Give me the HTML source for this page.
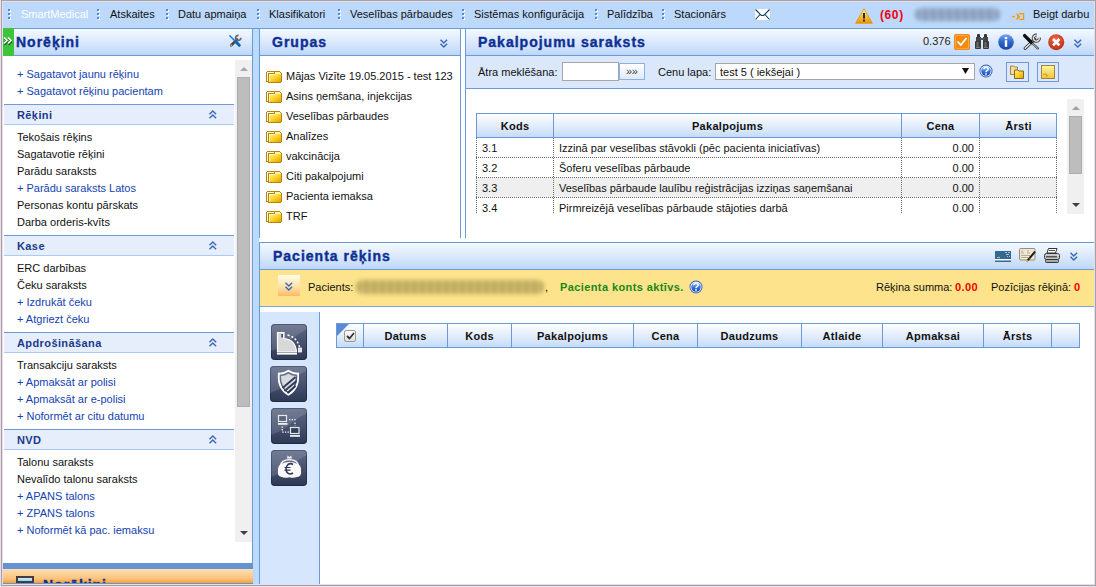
<!DOCTYPE html>
<html><head><meta charset="utf-8">
<style>
*{margin:0;padding:0;box-sizing:border-box}
html,body{width:1096px;height:587px;overflow:hidden;background:#ecdcec;font-family:"Liberation Sans",sans-serif;font-size:11px;color:#111}
.a{position:absolute}
svg{position:absolute;overflow:visible}
.t{position:absolute;white-space:nowrap;line-height:15px}
.b{font-weight:bold;letter-spacing:0.4px}
.ttl{position:absolute;white-space:nowrap;font-weight:bold;font-size:14px;letter-spacing:1px;color:#0e3094;line-height:16px;-webkit-text-stroke:0.4px #0e3094}
.hdr{position:absolute;background:linear-gradient(#f5f9fe,#dbe9fc 50%,#bed7f8)}
.grip{position:absolute;width:3px;height:11px;top:9px;background:repeating-linear-gradient(#fff 0 2px,transparent 2px 4px) 1px 1px/2px 11px no-repeat}
.grip:after{content:"";position:absolute;left:0;top:0;width:2px;height:10px;background:repeating-linear-gradient(#5089dc 0 2px,transparent 2px 4px)}
.lnk{color:#1443b0}
.sec{position:absolute;left:4px;width:230px;height:21px;background:#e6eefc;border-top:1px solid #6f9ad6;border-bottom:1px solid #a9cbf6}
.sec span{position:absolute;left:13px;top:3px;font-weight:bold;color:#1a3a8a;letter-spacing:0.4px;line-height:15px}
.sec svg{left:205px;top:5px}
.th{position:absolute;background:linear-gradient(#fdfeff,#e6effc 45%,#c6dbf8);border:1px solid #6c9ad8}
.tht{position:absolute;font-weight:bold;letter-spacing:0.3px;color:#111;top:5px;white-space:nowrap;text-align:center;line-height:15px}
.dv{position:absolute;top:0;bottom:0;width:1px;background:#6c9ad8}
.row{position:absolute;left:0;width:581px;height:20px;border-bottom:1px dotted #777}
.vd{position:absolute;top:0;width:1px;height:76px;background:repeating-linear-gradient(#6a6a6a 0 1px,transparent 1px 2px)}
.hd{position:absolute;left:0;width:581px;height:1px;background:repeating-linear-gradient(90deg,#6a6a6a 0 1px,transparent 1px 2px)}
.sico{position:absolute;left:271px;width:36px;height:36px;border-radius:4px;background:linear-gradient(#5e6a86,#46526e 50%,#2c3854);overflow:hidden;box-shadow:inset 0 0 0 1px rgba(20,30,50,0.5)}
</style></head><body>
<!-- frame -->
<div class="a" style="left:1px;top:0;width:1095px;height:586px;background:#a89fa8"></div>
<div class="a" style="left:2px;top:1px;width:1093px;height:584px;background:#e2e0e2"></div>
<div class="a" style="left:3px;top:2px;width:1091px;height:582px;background:#fff"></div>
<!-- menu bar -->
<div class="a" style="left:3px;top:2px;width:1091px;height:26px;background:#bcd9fb"></div>
<div class="a" style="left:3px;top:28px;width:1091px;height:1px;background:#6a9ad8"></div>
<div class="grip" style="left:8px"></div>
<div class="t" style="left:21px;top:7px;color:#fff">SmartMedical</div>
<div class="grip" style="left:97px"></div>
<div class="t" style="left:110px;top:7px">Atskaites</div>
<div class="grip" style="left:166px"></div>
<div class="t" style="left:178px;top:7px">Datu apmaiņa</div>
<div class="grip" style="left:257px"></div>
<div class="t" style="left:269px;top:7px">Klasifikatori</div>
<div class="grip" style="left:338px"></div>
<div class="t" style="left:350px;top:7px">Veselības pārbaudes</div>
<div class="grip" style="left:462px"></div>
<div class="t" style="left:474px;top:7px">Sistēmas konfigurācija</div>
<div class="grip" style="left:595px"></div>
<div class="t" style="left:607px;top:7px">Palīdzība</div>
<div class="grip" style="left:662px"></div>
<div class="t" style="left:674px;top:7px">Stacionārs</div>
<svg style="left:755px;top:9px" width="15" height="11" viewBox="0 0 15 11"><rect x="0" y="0" width="15" height="11" fill="#fff"/><path d="M0.5 0.5 L5 5.2 L6.5 6.5 H8.5 L10 5.2 L14.5 0.5 M0.5 10.5 L5 5.5 M14.5 10.5 L10 5.5" fill="none" stroke="#0c3a60" stroke-width="1.1"/></svg>
<svg style="left:855px;top:8px" width="18" height="16" viewBox="0 0 18 16"><defs><linearGradient id="wg" x1="0" y1="0" x2="0" y2="1"><stop offset="0" stop-color="#fff4b8"/><stop offset="0.55" stop-color="#fcc030"/><stop offset="1" stop-color="#f59000"/></linearGradient></defs><path d="M9 0.8 L17.4 15.2 L0.6 15.2 Z" fill="url(#wg)" stroke="#e09000" stroke-width="0.8" stroke-linejoin="round"/><rect x="8" y="5" width="2" height="5.5" fill="#1a2a3a"/><rect x="8" y="11.5" width="2" height="2" fill="#2a3a4a"/></svg>
<div class="t b" style="left:880px;top:8px;color:#f4000c;font-size:12px;letter-spacing:0.6px">(60)</div>
<div class="a" style="left:915px;top:8px;width:85px;height:13px;background:repeating-linear-gradient(90deg,#7f95b6 0 5px,#a2b4cc 5px 8px);border-radius:6px;filter:blur(2px);opacity:0.9"></div>
<svg style="left:1012px;top:13px" width="13" height="7" viewBox="0 0 13 7"><rect x="0" y="2.9" width="3" height="1.3" fill="#f89a00"/><path d="M4 0.6 H5.6 L8.2 3.5 L5.6 6.4 H4 L5.6 3.5 Z" fill="#f89a00"/><path d="M7.2 0.6 H11.6 V6.4 H7.2" fill="none" stroke="#f89a00" stroke-width="1.2"/></svg>
<div class="t" style="left:1033px;top:7px">Beigt darbu</div>

<!-- left panel -->
<div class="a" style="left:3px;top:29px;width:250px;height:555px;background:#fff;border-right:1px solid #6a9ad8"></div>
<div class="hdr" style="left:14px;top:29px;width:238px;height:27px;border-bottom:1px solid #6a9ad8"></div>
<div class="a" style="left:3px;top:28px;width:11px;height:28px;background:#3cc43c"></div>
<svg style="left:3px;top:37px" width="11" height="9" viewBox="0 0 11 9"><path d="M1.5 2 L4.5 5 L1.5 8 M5.5 2 L8.5 5 L5.5 8" fill="none" stroke="#1a3a1a" stroke-opacity="0.75" stroke-width="1.5"/><path d="M1 0.5 L4 3.5 L1 6.5 M5 0.5 L8 3.5 L5 6.5" fill="none" stroke="#fff" stroke-width="1.5"/></svg>
<div class="ttl" style="left:16px;top:34px">Norēķini</div>
<svg style="left:229px;top:35px" width="12" height="12" viewBox="0 0 12 12"><path d="M8.2 4.6 L2.2 10.3" stroke="#4a4a4a" stroke-width="2.8" stroke-linecap="round"/><circle cx="2.1" cy="10.3" r="0.7" fill="#ddd"/><path d="M9.6 0.4 A2.6 2.6 0 1 0 11.8 2.8" fill="none" stroke="#6a6a6a" stroke-width="1.8"/><path d="M0.8 0.8 L6 6" stroke="#1a7ad0" stroke-width="1.5" stroke-linecap="round"/><path d="M6.5 6.5 L10.3 10.3" stroke="#0f62b8" stroke-width="3" stroke-linecap="round"/></svg>

<div class="t lnk" style="left:17px;top:67px">+ Sagatavot jaunu rēķinu</div>
<div class="t lnk" style="left:17px;top:84px">+ Sagatavot rēķinu pacientam</div>

<div class="sec" style="top:104px"><span>Rēķini</span><svg width="8" height="8" viewBox="0 0 8 8"><path d="M0.5 4.2 L3.8 1 L7.1 4.2 M0.5 8.2 L3.8 5 L7.1 8.2" fill="none" stroke="#3a69b8" stroke-width="1.45"/></svg></div>
<div class="t" style="left:17px;top:130px">Tekošais rēķins</div>
<div class="t" style="left:17px;top:147px">Sagatavotie rēķini</div>
<div class="t" style="left:17px;top:164px">Parādu saraksts</div>
<div class="t lnk" style="left:17px;top:181px">+ Parādu saraksts Latos</div>
<div class="t" style="left:17px;top:198px">Personas kontu pārskats</div>
<div class="t" style="left:17px;top:215px">Darba orderis-kvīts</div>

<div class="sec" style="top:235px"><span>Kase</span><svg width="8" height="8" viewBox="0 0 8 8"><path d="M0.5 4.2 L3.8 1 L7.1 4.2 M0.5 8.2 L3.8 5 L7.1 8.2" fill="none" stroke="#3a69b8" stroke-width="1.45"/></svg></div>
<div class="t" style="left:17px;top:261px">ERC darbības</div>
<div class="t" style="left:17px;top:278px">Čeku saraksts</div>
<div class="t lnk" style="left:17px;top:295px">+ Izdrukāt čeku</div>
<div class="t lnk" style="left:17px;top:312px">+ Atgriezt čeku</div>

<div class="sec" style="top:332px"><span>Apdrošināšana</span><svg width="8" height="8" viewBox="0 0 8 8"><path d="M0.5 4.2 L3.8 1 L7.1 4.2 M0.5 8.2 L3.8 5 L7.1 8.2" fill="none" stroke="#3a69b8" stroke-width="1.45"/></svg></div>
<div class="t" style="left:17px;top:358px">Transakciju saraksts</div>
<div class="t lnk" style="left:17px;top:375px">+ Apmaksāt ar polisi</div>
<div class="t lnk" style="left:17px;top:392px">+ Apmaksāt ar e-polisi</div>
<div class="t lnk" style="left:17px;top:409px">+ Noformēt ar citu datumu</div>

<div class="sec" style="top:429px"><span>NVD</span><svg width="8" height="8" viewBox="0 0 8 8"><path d="M0.5 4.2 L3.8 1 L7.1 4.2 M0.5 8.2 L3.8 5 L7.1 8.2" fill="none" stroke="#3a69b8" stroke-width="1.45"/></svg></div>
<div class="t" style="left:17px;top:455px">Talonu saraksts</div>
<div class="t" style="left:17px;top:472px">Nevalīdo talonu saraksts</div>
<div class="t lnk" style="left:17px;top:489px">+ APANS talons</div>
<div class="t lnk" style="left:17px;top:506px">+ ZPANS talons</div>
<div class="t lnk" style="left:17px;top:523px">+ Noformēt kā pac. iemaksu</div>

<div class="a" style="left:235px;top:60px;width:17px;height:482px;background:#f0f0f0"></div>
<svg style="left:240px;top:67px" width="8" height="4" viewBox="0 0 8 4"><path d="M0 4 L4 0 L8 4 Z" fill="#a8a8a8"/></svg>
<div class="a" style="left:237px;top:77px;width:13px;height:330px;background:#bdbdbd;border:1px solid #adadad"></div>
<svg style="left:240px;top:531px" width="8" height="4" viewBox="0 0 8 4"><path d="M0 0 L4 4 L8 0 Z" fill="#404040"/></svg>

<div class="a" style="left:3px;top:563px;width:250px;height:6px;background:#6592d0"></div>
<div class="a" style="left:3px;top:569px;width:250px;height:14px;background:linear-gradient(#ffdfb4,#fcc27e 70%,#f7a02a)"></div>
<div class="a" style="left:3px;top:583px;width:250px;height:1px;background:#6592d0"></div>
<div class="a" style="left:16px;top:576px;width:18px;height:7px;border:2px solid #4a3a38;background:linear-gradient(#c8f0ff,#8ad8f8)"></div>
<div class="a" style="left:43px;top:577px;width:100px;height:6px;overflow:hidden"><div class="ttl" style="left:0;top:0">Norēķini</div></div>

<div class="a" style="left:253px;top:29px;width:6px;height:555px;background:#bcdafc"></div>
<svg width="0" height="0" style="position:absolute">
<defs>
<linearGradient id="fg" x1="0" y1="0" x2="1" y2="1"><stop offset="0" stop-color="#fff57a"/><stop offset="0.5" stop-color="#fcd22a"/><stop offset="1" stop-color="#e0a000"/></linearGradient>


<linearGradient id="hg" x1="0" y1="0" x2="0" y2="1"><stop offset="0" stop-color="#a8d0ff"/><stop offset="0.5" stop-color="#3a78e0"/><stop offset="1" stop-color="#1040a8"/></linearGradient>

</defs></svg>

<!-- Grupas panel -->
<div class="a" style="left:259px;top:29px;width:202px;height:209px;background:#fff;border-left:1px solid #6a9ad8;border-right:1px solid #6a9ad8"></div>
<div class="hdr" style="left:260px;top:29px;width:200px;height:27px;border-bottom:1px solid #6a9ad8"></div>
<div class="ttl" style="left:272px;top:34px">Grupas</div>
<svg style="left:440px;top:39px" width="8" height="8" viewBox="0 0 8 8"><path d="M0.5 0.8 L3.8 4 L7.1 0.8 M0.5 4.8 L3.8 8 L7.1 4.8" fill="none" stroke="#3a69b8" stroke-width="1.45"/></svg>

<svg style="left:266px;top:71px" width="16" height="12" viewBox="0 0 16 12"><g shape-rendering="crispEdges"><rect x="1" y="0" width="13" height="1" fill="#b88408"/><rect x="0" y="1" width="1" height="10" fill="#b88408"/><rect x="14" y="1" width="1" height="1" fill="#b88408"/><rect x="15" y="2" width="1" height="9" fill="#b88408"/><rect x="2" y="11" width="13" height="1" fill="#b88408"/><rect x="1" y="10" width="1" height="1" fill="#b88408"/><rect x="1" y="1" width="1" height="9" fill="#fffbe8"/><rect x="2" y="1" width="6" height="1" fill="#fffbe8"/><rect x="2" y="2" width="6" height="1" fill="#b88408"/><rect x="8" y="1" width="1" height="2" fill="#b88408"/><rect x="2" y="2" width="1" height="9" fill="#b88408"/><rect x="9" y="1" width="5" height="2" fill="#fff6b8"/><rect x="14" y="2" width="1" height="1" fill="#fff6b8"/><rect x="3" y="3" width="12" height="8" fill="url(#fg)"/><rect x="3" y="3" width="6" height="1" fill="#fff8d0"/><rect x="3" y="4" width="1" height="7" fill="#fff2a8"/></g></svg>
<svg style="left:266px;top:91px" width="16" height="12" viewBox="0 0 16 12"><g shape-rendering="crispEdges"><rect x="1" y="0" width="13" height="1" fill="#b88408"/><rect x="0" y="1" width="1" height="10" fill="#b88408"/><rect x="14" y="1" width="1" height="1" fill="#b88408"/><rect x="15" y="2" width="1" height="9" fill="#b88408"/><rect x="2" y="11" width="13" height="1" fill="#b88408"/><rect x="1" y="10" width="1" height="1" fill="#b88408"/><rect x="1" y="1" width="1" height="9" fill="#fffbe8"/><rect x="2" y="1" width="6" height="1" fill="#fffbe8"/><rect x="2" y="2" width="6" height="1" fill="#b88408"/><rect x="8" y="1" width="1" height="2" fill="#b88408"/><rect x="2" y="2" width="1" height="9" fill="#b88408"/><rect x="9" y="1" width="5" height="2" fill="#fff6b8"/><rect x="14" y="2" width="1" height="1" fill="#fff6b8"/><rect x="3" y="3" width="12" height="8" fill="url(#fg)"/><rect x="3" y="3" width="6" height="1" fill="#fff8d0"/><rect x="3" y="4" width="1" height="7" fill="#fff2a8"/></g></svg>
<svg style="left:266px;top:111px" width="16" height="12" viewBox="0 0 16 12"><g shape-rendering="crispEdges"><rect x="1" y="0" width="13" height="1" fill="#b88408"/><rect x="0" y="1" width="1" height="10" fill="#b88408"/><rect x="14" y="1" width="1" height="1" fill="#b88408"/><rect x="15" y="2" width="1" height="9" fill="#b88408"/><rect x="2" y="11" width="13" height="1" fill="#b88408"/><rect x="1" y="10" width="1" height="1" fill="#b88408"/><rect x="1" y="1" width="1" height="9" fill="#fffbe8"/><rect x="2" y="1" width="6" height="1" fill="#fffbe8"/><rect x="2" y="2" width="6" height="1" fill="#b88408"/><rect x="8" y="1" width="1" height="2" fill="#b88408"/><rect x="2" y="2" width="1" height="9" fill="#b88408"/><rect x="9" y="1" width="5" height="2" fill="#fff6b8"/><rect x="14" y="2" width="1" height="1" fill="#fff6b8"/><rect x="3" y="3" width="12" height="8" fill="url(#fg)"/><rect x="3" y="3" width="6" height="1" fill="#fff8d0"/><rect x="3" y="4" width="1" height="7" fill="#fff2a8"/></g></svg>
<svg style="left:266px;top:131px" width="16" height="12" viewBox="0 0 16 12"><g shape-rendering="crispEdges"><rect x="1" y="0" width="13" height="1" fill="#b88408"/><rect x="0" y="1" width="1" height="10" fill="#b88408"/><rect x="14" y="1" width="1" height="1" fill="#b88408"/><rect x="15" y="2" width="1" height="9" fill="#b88408"/><rect x="2" y="11" width="13" height="1" fill="#b88408"/><rect x="1" y="10" width="1" height="1" fill="#b88408"/><rect x="1" y="1" width="1" height="9" fill="#fffbe8"/><rect x="2" y="1" width="6" height="1" fill="#fffbe8"/><rect x="2" y="2" width="6" height="1" fill="#b88408"/><rect x="8" y="1" width="1" height="2" fill="#b88408"/><rect x="2" y="2" width="1" height="9" fill="#b88408"/><rect x="9" y="1" width="5" height="2" fill="#fff6b8"/><rect x="14" y="2" width="1" height="1" fill="#fff6b8"/><rect x="3" y="3" width="12" height="8" fill="url(#fg)"/><rect x="3" y="3" width="6" height="1" fill="#fff8d0"/><rect x="3" y="4" width="1" height="7" fill="#fff2a8"/></g></svg>
<svg style="left:266px;top:151px" width="16" height="12" viewBox="0 0 16 12"><g shape-rendering="crispEdges"><rect x="1" y="0" width="13" height="1" fill="#b88408"/><rect x="0" y="1" width="1" height="10" fill="#b88408"/><rect x="14" y="1" width="1" height="1" fill="#b88408"/><rect x="15" y="2" width="1" height="9" fill="#b88408"/><rect x="2" y="11" width="13" height="1" fill="#b88408"/><rect x="1" y="10" width="1" height="1" fill="#b88408"/><rect x="1" y="1" width="1" height="9" fill="#fffbe8"/><rect x="2" y="1" width="6" height="1" fill="#fffbe8"/><rect x="2" y="2" width="6" height="1" fill="#b88408"/><rect x="8" y="1" width="1" height="2" fill="#b88408"/><rect x="2" y="2" width="1" height="9" fill="#b88408"/><rect x="9" y="1" width="5" height="2" fill="#fff6b8"/><rect x="14" y="2" width="1" height="1" fill="#fff6b8"/><rect x="3" y="3" width="12" height="8" fill="url(#fg)"/><rect x="3" y="3" width="6" height="1" fill="#fff8d0"/><rect x="3" y="4" width="1" height="7" fill="#fff2a8"/></g></svg>
<svg style="left:266px;top:171px" width="16" height="12" viewBox="0 0 16 12"><g shape-rendering="crispEdges"><rect x="1" y="0" width="13" height="1" fill="#b88408"/><rect x="0" y="1" width="1" height="10" fill="#b88408"/><rect x="14" y="1" width="1" height="1" fill="#b88408"/><rect x="15" y="2" width="1" height="9" fill="#b88408"/><rect x="2" y="11" width="13" height="1" fill="#b88408"/><rect x="1" y="10" width="1" height="1" fill="#b88408"/><rect x="1" y="1" width="1" height="9" fill="#fffbe8"/><rect x="2" y="1" width="6" height="1" fill="#fffbe8"/><rect x="2" y="2" width="6" height="1" fill="#b88408"/><rect x="8" y="1" width="1" height="2" fill="#b88408"/><rect x="2" y="2" width="1" height="9" fill="#b88408"/><rect x="9" y="1" width="5" height="2" fill="#fff6b8"/><rect x="14" y="2" width="1" height="1" fill="#fff6b8"/><rect x="3" y="3" width="12" height="8" fill="url(#fg)"/><rect x="3" y="3" width="6" height="1" fill="#fff8d0"/><rect x="3" y="4" width="1" height="7" fill="#fff2a8"/></g></svg>
<svg style="left:266px;top:191px" width="16" height="12" viewBox="0 0 16 12"><g shape-rendering="crispEdges"><rect x="1" y="0" width="13" height="1" fill="#b88408"/><rect x="0" y="1" width="1" height="10" fill="#b88408"/><rect x="14" y="1" width="1" height="1" fill="#b88408"/><rect x="15" y="2" width="1" height="9" fill="#b88408"/><rect x="2" y="11" width="13" height="1" fill="#b88408"/><rect x="1" y="10" width="1" height="1" fill="#b88408"/><rect x="1" y="1" width="1" height="9" fill="#fffbe8"/><rect x="2" y="1" width="6" height="1" fill="#fffbe8"/><rect x="2" y="2" width="6" height="1" fill="#b88408"/><rect x="8" y="1" width="1" height="2" fill="#b88408"/><rect x="2" y="2" width="1" height="9" fill="#b88408"/><rect x="9" y="1" width="5" height="2" fill="#fff6b8"/><rect x="14" y="2" width="1" height="1" fill="#fff6b8"/><rect x="3" y="3" width="12" height="8" fill="url(#fg)"/><rect x="3" y="3" width="6" height="1" fill="#fff8d0"/><rect x="3" y="4" width="1" height="7" fill="#fff2a8"/></g></svg>
<svg style="left:266px;top:211px" width="16" height="12" viewBox="0 0 16 12"><g shape-rendering="crispEdges"><rect x="1" y="0" width="13" height="1" fill="#b88408"/><rect x="0" y="1" width="1" height="10" fill="#b88408"/><rect x="14" y="1" width="1" height="1" fill="#b88408"/><rect x="15" y="2" width="1" height="9" fill="#b88408"/><rect x="2" y="11" width="13" height="1" fill="#b88408"/><rect x="1" y="10" width="1" height="1" fill="#b88408"/><rect x="1" y="1" width="1" height="9" fill="#fffbe8"/><rect x="2" y="1" width="6" height="1" fill="#fffbe8"/><rect x="2" y="2" width="6" height="1" fill="#b88408"/><rect x="8" y="1" width="1" height="2" fill="#b88408"/><rect x="2" y="2" width="1" height="9" fill="#b88408"/><rect x="9" y="1" width="5" height="2" fill="#fff6b8"/><rect x="14" y="2" width="1" height="1" fill="#fff6b8"/><rect x="3" y="3" width="12" height="8" fill="url(#fg)"/><rect x="3" y="3" width="6" height="1" fill="#fff8d0"/><rect x="3" y="4" width="1" height="7" fill="#fff2a8"/></g></svg>
<div class="t" style="left:286px;top:69px">Mājas Vizīte 19.05.2015 - test 123</div>
<div class="t" style="left:286px;top:89px">Asins ņemšana, injekcijas</div>
<div class="t" style="left:286px;top:109px">Veselības pārbaudes</div>
<div class="t" style="left:286px;top:129px">Analīzes</div>
<div class="t" style="left:286px;top:149px">vakcinācija</div>
<div class="t" style="left:286px;top:169px">Citi pakalpojumi</div>
<div class="t" style="left:286px;top:189px">Pacienta iemaksa</div>
<div class="t" style="left:286px;top:209px">TRF</div>

<!-- Pakalpojumu panel -->
<div class="a" style="left:465px;top:29px;width:629px;height:209px;background:#fff;border-left:1px solid #6a9ad8"></div>
<div class="hdr" style="left:466px;top:29px;width:628px;height:27px;border-bottom:1px solid #6a9ad8"></div>
<div class="ttl" style="left:478px;top:34px">Pakalpojumu saraksts</div>
<div class="t" style="left:923px;top:34px;color:#222">0.376</div>
<svg style="left:954px;top:34px" width="16" height="16" viewBox="0 0 16 16"><rect x="0" y="0" width="16" height="16" rx="2" fill="#f08a10"/><rect x="1.5" y="1.5" width="13" height="13" rx="1" fill="none" stroke="#f8a848" stroke-width="1"/><path d="M3.5 7.5 L6.8 11 L12.5 4" fill="none" stroke="#fff" stroke-width="1.8"/></svg>
<svg style="left:975px;top:34px" width="14" height="15" viewBox="0 0 14 15"><rect x="2" y="0" width="3" height="4" rx="1" fill="#333"/><rect x="9" y="0" width="3" height="4" rx="1" fill="#333"/><rect x="1" y="3" width="5" height="5" fill="#444"/><rect x="8" y="3" width="5" height="5" fill="#444"/><rect x="5" y="4" width="4" height="2" fill="#555"/><rect x="0" y="7" width="6" height="8" rx="1" fill="#3a3a3a"/><rect x="8" y="7" width="6" height="8" rx="1" fill="#3a3a3a"/><rect x="1.5" y="8" width="2" height="5" fill="#6a6a6a"/><rect x="9.5" y="8" width="2" height="5" fill="#6a6a6a"/><rect x="1" y="13" width="4" height="1" fill="#777"/><rect x="9" y="13" width="4" height="1" fill="#777"/></svg>
<svg style="left:998px;top:34px" width="16" height="16" viewBox="0 0 16 16"><defs><linearGradient id="ig" x1="0" y1="0" x2="0" y2="1"><stop offset="0" stop-color="#7aa8ee"/><stop offset="0.5" stop-color="#2e68cc"/><stop offset="1" stop-color="#1a44a0"/></linearGradient></defs><circle cx="8" cy="8" r="7.8" fill="url(#ig)"/><rect x="6.8" y="3" width="2.4" height="2.2" fill="#fff"/><rect x="6.8" y="6.2" width="2.4" height="6.6" fill="#fff"/></svg>
<svg style="left:1023px;top:34px" width="17" height="16" viewBox="0 0 17 16"><path d="M11.8 5.2 L2.2 14.3" stroke="#3a3a3a" stroke-width="3.2" stroke-linecap="round"/><path d="M11.8 5.2 L2.2 14.3" stroke="#e4e4e4" stroke-width="1.5" stroke-linecap="round"/><path d="M16.25 3.68 A3 3 0 1 1 13.82 1.25" fill="none" stroke="#3a3a3a" stroke-width="3.2"/><path d="M16.25 3.68 A3 3 0 1 1 13.82 1.25" fill="none" stroke="#e0e0e0" stroke-width="1.5"/><path d="M8 8 L14.8 14.4" stroke="#444" stroke-width="2.2" stroke-linecap="round"/><path d="M8 8 L14.8 14.4" stroke="#eee" stroke-width="0.8"/><path d="M1.6 1.6 L8.2 8.2" stroke="#111" stroke-width="3.4" stroke-linecap="round"/></svg>
<svg style="left:1048px;top:34px" width="17" height="17" viewBox="0 0 17 17"><defs><radialGradient id="rg" cx="0.45" cy="0.35" r="0.7"><stop offset="0" stop-color="#f06a50"/><stop offset="1" stop-color="#b82a10"/></radialGradient></defs><circle cx="8.2" cy="8.2" r="8" fill="url(#rg)"/><path d="M5 5 L11.4 11.4 M11.4 5 L5 11.4" stroke="#fff" stroke-width="2.6"/></svg>
<svg style="left:1074px;top:39px" width="8" height="8" viewBox="0 0 8 8"><path d="M0.5 0.8 L3.8 4 L7.1 0.8 M0.5 4.8 L3.8 8 L7.1 4.8" fill="none" stroke="#3a69b8" stroke-width="1.45"/></svg>

<div class="a" style="left:466px;top:56px;width:628px;height:33px;background:#dbe8fc;border-bottom:1px solid #6a9ad8"></div>
<div class="t" style="left:478px;top:65px">Ātra meklēšana:</div>
<div class="a" style="left:562px;top:62px;width:57px;height:19px;background:#fff;border:1px solid #a5a5a5"></div>
<div class="a" style="left:619px;top:63px;width:26px;height:17px;background:linear-gradient(#fff,#dfeafb);border:1px solid #8cb0e4"></div>
<div class="t" style="left:626px;top:64px;font-size:11px;color:#3a3a3a;letter-spacing:-0.3px">»»</div>
<div class="t" style="left:658px;top:65px">Cenu lapa:</div>
<div class="a" style="left:715px;top:63px;width:260px;height:17px;background:#fff;border:1px solid #a5a5a5"></div>
<div class="t" style="left:720px;top:65px">test 5 ( iekšejai )</div>
<svg style="left:962px;top:68px" width="7" height="6" viewBox="0 0 7 6"><path d="M0 0 H7 L3.5 6 Z" fill="#111"/></svg>
<svg style="left:979px;top:64px" width="14" height="14" viewBox="0 0 14 14"><circle cx="7" cy="7" r="6.5" fill="#2a58b8"/><circle cx="7" cy="7" r="5.6" fill="#fff"/><circle cx="7" cy="7" r="4.8" fill="url(#hg)"/><path d="M5 5.3 Q5 3.2 7 3.2 Q9.1 3.2 9.1 5 Q9.1 6.2 7.8 6.8 Q7 7.2 7 8.3" fill="none" stroke="#fff" stroke-width="1.5"/><rect x="6.2" y="9.2" width="1.6" height="1.6" fill="#fff"/></svg>
<div class="a" style="left:1006px;top:62px;width:23px;height:20px;border:1px solid #6a9ad8"></div>
<svg style="left:1010px;top:65px" width="15" height="14" viewBox="0 0 15 14"><path d="M0.5 1 H3.5 L4.5 2 H7.5 V9.5 H0.5 Z" fill="#f4dc90" stroke="#8a7040" stroke-width="0.8"/><path d="M4.5 5 H8 L9 6 H13.5 V13.5 H4.5 Z" fill="url(#fg)" stroke="#7a5a20" stroke-width="0.9"/></svg>
<div class="a" style="left:1037px;top:62px;width:22px;height:20px;border:1px solid #6a9ad8"></div>
<svg style="left:1041px;top:65px" width="14" height="14" viewBox="0 0 14 14"><defs><linearGradient id="ng" x1="0" y1="0" x2="0" y2="1"><stop offset="0" stop-color="#fff6a0"/><stop offset="1" stop-color="#f2c23a"/></linearGradient></defs><rect x="0.5" y="0.5" width="13" height="13" fill="url(#ng)" stroke="#9a7a30" stroke-width="0.9"/><path d="M2.5 9.5 Q4 8 6 10 Q7 11 5 11.5" fill="none" stroke="#d08a10" stroke-width="1"/></svg>
<!-- services table -->
<div class="th" style="left:476px;top:113px;width:581px;height:25px">
 <div class="dv" style="left:76px"></div><div class="dv" style="left:424px"></div><div class="dv" style="left:502px"></div>
 <div class="tht" style="left:0;width:76px">Kods</div>
 <div class="tht" style="left:77px;width:347px">Pakalpojums</div>
 <div class="tht" style="left:425px;width:77px">Cena</div>
 <div class="tht" style="left:503px;width:77px">Ārsti</div>
</div>
<div class="a" style="left:476px;top:138px;width:581px;height:76px;overflow:hidden">
 <div class="a" style="left:0;top:40px;width:581px;height:19px;background:#efefef"></div>
 <div class="hd" style="top:19px"></div><div class="hd" style="top:39px"></div><div class="hd" style="top:59px"></div>
 <div class="vd" style="left:0"></div><div class="vd" style="left:77px"></div><div class="vd" style="left:425px"></div><div class="vd" style="left:503px"></div><div class="vd" style="left:580px"></div>
 <div class="t" style="left:6px;top:3px">3.1</div><div class="t" style="left:83px;top:3px">Izzinā par veselības stāvokli (pēc pacienta iniciatīvas)</div><div class="t" style="left:448px;top:3px;width:50px;text-align:right">0.00</div>
 <div class="t" style="left:6px;top:23px">3.2</div><div class="t" style="left:83px;top:23px">Šoferu veselības pārbaude</div><div class="t" style="left:448px;top:23px;width:50px;text-align:right">0.00</div>
 <div class="t" style="left:6px;top:43px">3.3</div><div class="t" style="left:83px;top:43px">Veselības pārbaude laulību reģistrācijas izziņas saņemšanai</div><div class="t" style="left:448px;top:43px;width:50px;text-align:right">0.00</div>
 <div class="t" style="left:6px;top:63px">3.4</div><div class="t" style="left:83px;top:63px">Pirmreizējā veselības pārbaude stājoties darbā</div><div class="t" style="left:448px;top:63px;width:50px;text-align:right">0.00</div>
</div>
<div class="a" style="left:1067px;top:99px;width:17px;height:115px;background:#f0f0f0"></div>
<svg style="left:1072px;top:106px" width="8" height="4" viewBox="0 0 8 4"><path d="M0 4 L4 0 L8 4 Z" fill="#a0a0a0"/></svg>
<div class="a" style="left:1069px;top:116px;width:13px;height:58px;background:#bdbdbd;border:1px solid #adadad"></div>
<svg style="left:1072px;top:203px" width="8" height="4" viewBox="0 0 8 4"><path d="M0 0 L4 4 L8 0 Z" fill="#404040"/></svg>

<div class="a" style="left:259px;top:242px;width:835px;height:1px;background:#6a9ad8"></div>

<!-- Pacienta panel -->
<div class="a" style="left:259px;top:243px;width:835px;height:341px;background:#fff;border-left:1px solid #6a9ad8"></div>
<div class="hdr" style="left:260px;top:243px;width:834px;height:27px;border-bottom:1px solid #6a9ad8"></div>
<div class="ttl" style="left:273px;top:248px">Pacienta rēķins</div>
<svg style="left:995px;top:251px" width="16" height="11" viewBox="0 0 16 11"><rect x="0" y="0" width="16" height="8" fill="#336890"/><rect x="0" y="8" width="16" height="1.5" fill="#fff"/><rect x="0" y="9.5" width="16" height="1.5" fill="#3a6a90"/><path d="M10 1.5 h2 M13 1.5 h2 M11 3.5 h3 M12 5.5 h1 M14 5.5 h1 M2 6.5 h3" stroke="#a8c4dc" stroke-width="1"/></svg>
<svg style="left:1019px;top:248px" width="17" height="15" viewBox="0 0 17 15"><rect x="0.5" y="0.5" width="15.5" height="11.5" rx="1" fill="#eee6d6" stroke="#9a8c7a"/><path d="M2 3 h2 M8 3 h2 M2 5 h3 M8 5 h3 M2 7.5 h9 M2 9.5 h7" stroke="#b4a48c" stroke-width="0.9"/><path d="M15.6 4.2 L9 12" stroke="#1c1c1c" stroke-width="2" stroke-linecap="round"/><path d="M10.5 10 l1 1" stroke="#d8a020" stroke-width="0.8"/><path d="M9 12 L7.6 14" stroke="#d8a020" stroke-width="1.4"/></svg>
<svg style="left:1044px;top:248px" width="17" height="15" viewBox="0 0 17 15"><path d="M4.5 0.5 H13 L11.5 5 H3 Z" fill="#fff" stroke="#333" stroke-width="1"/><path d="M5 2.5 h6" stroke="#555"/><rect x="0.5" y="5.5" width="15" height="6" rx="2" fill="#c8c8c8" stroke="#333"/><rect x="2" y="8" width="11" height="1.5" fill="#555"/><rect x="1.5" y="11.5" width="13" height="3" rx="1" fill="#aaa" stroke="#333"/><circle cx="14" cy="7" r="0.8" fill="#eee"/></svg>
<svg style="left:1070px;top:252px" width="8" height="8" viewBox="0 0 8 8"><path d="M0.5 0.8 L3.8 4 L7.1 0.8 M0.5 4.8 L3.8 8 L7.1 4.8" fill="none" stroke="#3a69b8" stroke-width="1.45"/></svg>

<div class="a" style="left:260px;top:270px;width:834px;height:37px;background:#fde38b;border-bottom:1px solid #7aa2dc"></div>
<div class="a" style="left:278px;top:275px;width:22px;height:21px;background:linear-gradient(#fffdea,#fee2aa 55%,#fdba68)"></div>
<svg style="left:285px;top:282px" width="8" height="8" viewBox="0 0 8 8"><path d="M0.5 0.8 L3.8 4 L7.1 0.8 M0.5 4.8 L3.8 8 L7.1 4.8" fill="none" stroke="#3a69b8" stroke-width="1.45"/></svg>
<div class="t" style="left:308px;top:280px">Pacients:</div>
<div class="a" style="left:356px;top:280px;width:188px;height:14px;background:repeating-linear-gradient(90deg,#a8964e 0 5px,#c4b26a 5px 8px);border-radius:6px;filter:blur(2px);opacity:0.75"></div>
<div class="t" style="left:545px;top:280px">,</div>
<div class="t b" style="left:560px;top:280px;color:#168a16">Pacienta konts aktīvs.</div>
<svg style="left:689px;top:280px" width="14" height="14" viewBox="0 0 14 14"><circle cx="7" cy="7" r="6.5" fill="#2a58b8"/><circle cx="7" cy="7" r="5.6" fill="#fff"/><circle cx="7" cy="7" r="4.8" fill="url(#hg)"/><path d="M5 5.3 Q5 3.2 7 3.2 Q9.1 3.2 9.1 5 Q9.1 6.2 7.8 6.8 Q7 7.2 7 8.3" fill="none" stroke="#fff" stroke-width="1.5"/><rect x="6.2" y="9.2" width="1.6" height="1.6" fill="#fff"/></svg>
<div class="t" style="left:876px;top:280px">Rēķina summa:</div>
<div class="t b" style="left:955px;top:280px;color:#ee0000">0.00</div>
<div class="t" style="left:991px;top:280px">Pozīcijas rēķinā:</div>
<div class="t b" style="left:1074px;top:280px;color:#ee0000">0</div>

<div class="a" style="left:260px;top:312px;width:60px;height:272px;background:#d6e6fc;border-right:1px solid #6a9ad8"></div>
<div class="sico" style="top:324px"><svg style="left:0;top:0" width="36" height="36" viewBox="0 0 36 36"><path d="M0 27 Q14 22 22 14 Q30 8 36 5 V0 H0 Z" fill="#fff" fill-opacity="0.13"/><path d="M6.5 8.5 H13 V14.5 Q24.5 15.5 25.5 28 H6.5 Z" fill="#d8d8d8" stroke="#fff" stroke-width="1.2"/><rect x="10.3" y="10" width="1.6" height="3.5" fill="#3a4660"/><rect x="6" y="29" width="20" height="1.6" fill="#fff"/><path d="M16.5 11 Q26 13.5 28.5 23" fill="none" stroke="#fff" stroke-width="1.6" stroke-dasharray="2 2"/><rect x="27.5" y="24" width="3" height="4" fill="#ddd" stroke="#fff" stroke-width="0.8"/></svg></div>
<div class="sico" style="top:366px;left:270px;width:37px"><svg style="left:0;top:0" width="37" height="36" viewBox="0 0 37 36"><path d="M0 27 Q14 22 22 14 Q30 8 36 5 V0 H0 Z" fill="#fff" fill-opacity="0.13"/><path d="M18.4 4.8 Q23 7.8 28 7.5 Q29.5 22 18.4 28.7 Q7.3 22 8.9 7.5 Q13.8 7.8 18.4 4.8 Z" fill="none" stroke="#fff" stroke-width="1.8"/><path d="M18.4 7.8 Q22 10 25.8 10 Q26 21 18.4 26 Q10.8 21 11 10 Q14.8 10 18.4 7.8 Z" fill="#d8dae0"/><path d="M12.5 22 L25.5 11 M14.5 25 L26.5 15 M17.5 27 L25.5 20" stroke="#2e3a56" stroke-width="1.8"/></svg></div>
<div class="sico" style="top:408px"><svg style="left:0;top:0" width="36" height="36" viewBox="0 0 36 36"><path d="M0 27 Q14 22 22 14 Q30 8 36 5 V0 H0 Z" fill="#fff" fill-opacity="0.13"/><rect x="7.5" y="7.5" width="8" height="6" fill="#5a6680" stroke="#e8e8e8" stroke-width="1.2"/><rect x="7" y="15" width="9.5" height="1.8" fill="#eee"/><rect x="19.5" y="19.5" width="8.5" height="6" fill="#333f5a" stroke="#e8e8e8" stroke-width="1.2"/><rect x="19" y="27" width="10" height="1.8" fill="#eee"/><path d="M18 11.6 H25 M24 14.5 V17.5 M11.3 18.4 V22.5 M11.3 24.2 H18" stroke="#eee" stroke-width="1.3" stroke-dasharray="1.4 1.2"/></svg></div>
<div class="sico" style="top:450px"><svg style="left:0;top:0" width="36" height="36" viewBox="0 0 36 36"><path d="M0 27 Q14 22 22 14 Q30 8 36 5 V0 H0 Z" fill="#fff" fill-opacity="0.13"/><path d="M16 8.5 L16.5 5.5 L18.4 7 L20.3 5.5 L20.8 8.5 Z" fill="#eee"/><path d="M9.5 16 Q10 10 18.4 9.5 Q26.8 10 27.5 16" fill="none" stroke="#eee" stroke-width="1.6"/><path d="M10 14 Q18 9.8 27 14 Q30.5 16 30 21 Q31 26.5 26 27 Q22 28.5 18.4 27.2 Q14 28.5 10.5 27 Q6 26 7 21 Q6.5 16 10 14 Z" fill="#fafafa"/><path d="M22 14.5 Q19.5 12.8 17 14.5 Q15 16.5 15 19 Q15 22 17 23.3 Q19.5 24.8 22 23" fill="none" stroke="#2e3a56" stroke-width="1.6"/><path d="M13.5 17.5 H19.5 M13.5 20.2 H19.5" stroke="#2e3a56" stroke-width="1.2"/></svg></div>
<!-- bottom table header -->
<div class="th" style="left:336px;top:323px;width:744px;height:25px">
 <div class="dv" style="left:26px"></div><div class="dv" style="left:110px"></div><div class="dv" style="left:174px"></div><div class="dv" style="left:296px"></div><div class="dv" style="left:360px"></div><div class="dv" style="left:464px"></div><div class="dv" style="left:545px"></div><div class="dv" style="left:646px"></div><div class="dv" style="left:714px"></div>
 <svg style="left:0;top:0" width="12" height="12" viewBox="0 0 12 12"><path d="M0 0 H12 L0 12 Z" fill="#5a8ad4"/></svg>
 <div class="a" style="left:7px;top:6px;width:12px;height:12px;border:1px solid #9a9a9a;border-radius:2px;background:linear-gradient(#fff,#ddd)"></div>
 <svg style="left:9px;top:8px" width="9" height="8" viewBox="0 0 9 8"><path d="M1 4 L3.5 6.5 L8 1" fill="none" stroke="#333" stroke-width="1.8"/></svg>
 <div class="tht" style="left:27px;width:83px">Datums</div>
 <div class="tht" style="left:111px;width:63px">Kods</div>
 <div class="tht" style="left:175px;width:121px">Pakalpojums</div>
 <div class="tht" style="left:297px;width:63px">Cena</div>
 <div class="tht" style="left:361px;width:103px">Daudzums</div>
 <div class="tht" style="left:465px;width:80px">Atlaide</div>
 <div class="tht" style="left:546px;width:100px">Apmaksai</div>
 <div class="tht" style="left:647px;width:67px">Ārsts</div>
</div>
</body></html>
